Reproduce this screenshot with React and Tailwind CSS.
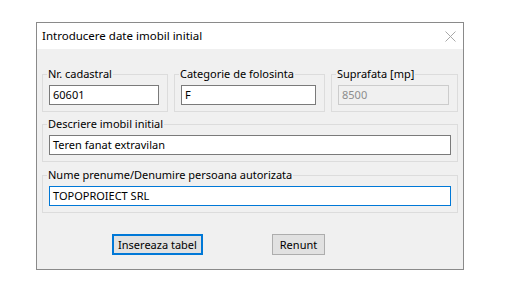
import React from "react";

const font = { fontFamily: '"Segoe UI", "Noto Sans", "Liberation Sans", sans-serif' };

function Group({ label, children, className = "" }) {
  return (
    <fieldset className={`border border-[#dcdcdc] px-[6px] pt-[4px] pb-[6px] ${className}`}>
      <legend className="-ml-[2px] px-[1px] text-[11px] leading-[14px] text-black">{label}</legend>
      {children}
    </fieldset>
  );
}

function TextBox({ value, disabled, focused, className = "" }) {
  let border = "border-[#7a7a7a] bg-white text-black";
  if (disabled) border = "border-[#cccccc] bg-[#f0f0f0] text-[#8d8d8d]";
  if (focused) border = "border-[#0078d7] bg-white text-black";
  return (
    <div className={`h-[20px] border flex items-center pl-[3px] text-[11px] ${border} ${className}`}>
      {value}
    </div>
  );
}

export default function App() {
  return (
    <div className="w-[509px] h-[301px] bg-white pt-[22px] pl-[36px]" style={font}>
      <div className="w-[428px] h-[248px] border border-[#8a8a8a] flex flex-col">
        {/* Title bar */}
        <div className="h-[26px] bg-white flex items-center justify-between pl-[5px] pr-[6px]">
          <span className="text-[11.5px] text-black">Introducere date imobil initial</span>
          <svg width="11" height="11" viewBox="0 0 11 11" className="mr-[1px]">
            <path d="M0.5 0.5 L10.5 10.5 M10.5 0.5 L0.5 10.5" stroke="#a8a8a8" strokeWidth="1" />
          </svg>
        </div>

        {/* Client area */}
        <div className="flex-1 bg-[#f0f0f0] px-[5px] pt-[18px]">
          <div className="grid grid-cols-[126px_151px_127px] gap-[6px]">
            <Group label="Nr. cadastral">
              <TextBox value="60601" className="mr-[2px]" />
            </Group>
            <Group label="Categorie de folosinta">
              <TextBox value="F" className="mr-[2px]" />
            </Group>
            <Group label="Suprafata [mp]">
              <TextBox value="8500" disabled className="mr-[2px]" />
            </Group>
          </div>

          <Group label="Descriere imobil initial" className="mt-[5px]">
            <TextBox value="Teren fanat extravilan" />
          </Group>

          <Group label="Nume prenume/Denumire persoana autorizata" className="mt-[6px]">
            <TextBox value="TOPOPROIECT SRL" focused />
          </Group>

          <div className="flex mt-[21px] pl-[70px]">
            <button className="w-[91px] h-[21px] border-2 border-[#0078d7] bg-[#e1e1e1] text-[11px] text-black leading-none">
              Insereaza tabel
            </button>
            <button className="ml-[69px] w-[53px] h-[21px] border border-[#adadad] bg-[#e1e1e1] text-[11px] text-black leading-none">
              Renunt
            </button>
          </div>
        </div>
      </div>
    </div>
  );
}
